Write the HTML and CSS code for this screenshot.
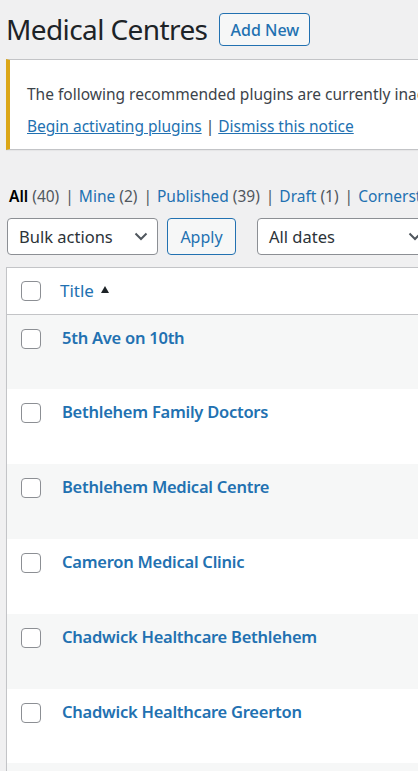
FILE: index.html
```html
<!DOCTYPE html>
<html lang="en">
<head>
<meta charset="utf-8">
<title>Medical Centres</title>
<link rel="stylesheet" href="styles.css">
</head>
<body>
<div class="wrap">
  <div class="head">
    <h1 class="title">Medical Centres</h1>
    <a class="add-new" href="#">Add New</a>
  </div>

  <div class="notice">
    <p>The following recommended plugins are currently inactive: Yoast SEO, Advanced Custom Fields.</p>
    <p><a href="#">Begin activating plugins</a> | <a href="#">Dismiss this notice</a></p>
  </div>

  <ul class="subsubsub">
    <li><a class="current" href="#">All <span class="count">(40)</span></a><span class="sep">|</span></li>
    <li><a href="#">Mine <span class="count">(2)</span></a><span class="sep">|</span></li>
    <li><a href="#">Published <span class="count">(39)</span></a><span class="sep">|</span></li>
    <li><a href="#">Draft <span class="count">(1)</span></a><span class="sep">|</span></li>
    <li><a href="#">Cornerstone content <span class="count">(0)</span></a></li>
  </ul>

  <div class="tablenav">
    <div class="select bulk"><span>Bulk actions</span><svg class="chev" width="14" height="9" viewBox="0 0 14 9"><polyline points="1.5,1.5 7,7 12.5,1.5" fill="none" stroke="#50575e" stroke-width="2"/></svg></div>
    <button class="button">Apply</button>
    <div class="select dates"><span>All dates</span><svg class="chev" width="14" height="9" viewBox="0 0 14 9"><polyline points="1.5,1.5 7,7 12.5,1.5" fill="none" stroke="#50575e" stroke-width="2"/></svg></div>
  </div>

  <table class="list">
    <thead>
      <tr>
        <th class="cb"><span class="checkbox"></span></th>
        <th class="col-title"><a class="sort-link" href="#">Title <span class="sort"></span></a></th>
      </tr>
    </thead>
    <tbody>
      <tr class="alt"><td class="cb"><span class="checkbox"></span></td><td class="col-title"><a class="row-title" href="#">5th Ave on 10th</a></td></tr>
      <tr><td class="cb"><span class="checkbox"></span></td><td class="col-title"><a class="row-title" href="#">Bethlehem Family Doctors</a></td></tr>
      <tr class="alt"><td class="cb"><span class="checkbox"></span></td><td class="col-title"><a class="row-title" href="#">Bethlehem Medical Centre</a></td></tr>
      <tr><td class="cb"><span class="checkbox"></span></td><td class="col-title"><a class="row-title" href="#">Cameron Medical Clinic</a></td></tr>
      <tr class="alt"><td class="cb"><span class="checkbox"></span></td><td class="col-title"><a class="row-title" href="#">Chadwick Healthcare Bethlehem</a></td></tr>
      <tr><td class="cb"><span class="checkbox"></span></td><td class="col-title"><a class="row-title" href="#">Chadwick Healthcare Greerton</a></td></tr>
      <tr class="alt"><td class="cb"><span class="checkbox"></span></td><td class="col-title"><a class="row-title" href="#">Chadwick Healthcare Papamoa</a></td></tr>
    </tbody>
  </table>
</div>
</body>
</html>
```

FILE: styles.css
```css
html, body {
  margin: 0;
  padding: 0;
  background: #f0f0f1;
  overflow: hidden;
}

body {
  font-family: "Noto Sans", "Open Sans", sans-serif;
  font-size: 16px;
  color: #3c434a;
  height: 771px;
}

a {
  color: #2271b1;
}

.wrap {
  width: 760px;
  padding-left: 6px;
}

.head {
  display: flex;
  align-items: center;
  gap: 12px;
  padding-top: 11px;
  height: 37px;
}

.title {
  margin: 0;
  font-size: 28px;
  font-weight: 400;
  line-height: 37px;
  color: #1d2327;
  letter-spacing: -0.6px;
}

.add-new {
  display: flex;
  align-items: center;
  justify-content: center;
  box-sizing: border-box;
  width: 91px;
  height: 33px;
  border: 1px solid #2271b1;
  border-radius: 4px;
  background: #f6f7f7;
  color: #2271b1;
  text-decoration: none;
  font-size: 16px;
  font-weight: 500;
}

.notice {
  margin-top: 11px;
  box-sizing: border-box;
  height: 91px;
  background: #fff;
  border: 1px solid #c3c4c7;
  border-left: 4px solid #dba617;
  box-shadow: 0 1px 1px rgba(0, 0, 0, 0.04);
  padding: 22px 18px 0 17px;
}

.notice p {
  margin: 0 0 8px 0;
  line-height: 24px;
  font-size: 15.5px;
  white-space: nowrap;
}

.notice a {
  text-decoration: underline;
}

.subsubsub {
  list-style: none;
  margin: 34px 0 0 0;
  padding: 0 0 0 3px;
  display: flex;
  height: 24px;
  line-height: 24px;
  font-size: 15.5px;
  white-space: nowrap;
}

.subsubsub a {
  text-decoration: none;
}

.subsubsub a.current {
  color: #000;
  font-weight: 600;
}

.subsubsub .count {
  color: #50575e;
  font-weight: 400;
}

.subsubsub .sep {
  color: #50575e;
  padding: 0 5px 0 6px;
}

.tablenav {
  display: flex;
  align-items: center;
  margin-top: 10px;
  height: 37px;
  padding-left: 1px;
}

.select {
  box-sizing: border-box;
  height: 37px;
  border: 1px solid #8c8f94;
  border-radius: 4px;
  background: #fff;
  display: flex;
  align-items: center;
  justify-content: space-between;
  padding: 0 9px 0 11px;
  font-size: 16.5px;
  color: #2c3338;
}

.bulk {
  width: 151px;
}

.dates {
  width: 175px;
  margin-left: 21px;
}

.chev {
  display: block;
}

.button {
  box-sizing: border-box;
  height: 37px;
  width: 69px;
  margin-left: 9px;
  border: 1px solid #2271b1;
  border-radius: 4px;
  background: #f6f7f7;
  color: #2271b1;
  font-family: inherit;
  font-size: 16px;
  padding: 0;
}

.list {
  margin-top: 12px;
  width: 700px;
  border-collapse: collapse;
  border: 1px solid #c3c4c7;
  background: #fff;
  box-shadow: 0 1px 1px rgba(0, 0, 0, 0.04);
}

.list th,
.list td {
  padding: 0;
  text-align: left;
  vertical-align: top;
}

.list thead tr {
  height: 47px;
  border-bottom: 1px solid #c3c4c7;
}

.list thead th {
  vertical-align: middle;
  font-weight: 400;
}

.list .cb {
  width: 39px;
  padding-left: 14px;
}

.list tbody td.cb {
  padding-top: 14px;
}

.checkbox {
  display: block;
  box-sizing: border-box;
  width: 20px;
  height: 20px;
  border: 1px solid #8c8f94;
  border-radius: 4px;
  background: #fff;
}

.col-title a {
  text-decoration: none;
}

.sort-link {
  display: inline-flex;
  align-items: center;
  font-size: 17px;
  line-height: 24px;
}

.sort {
  display: inline-block;
  width: 0;
  height: 0;
  margin-left: 7px;
  margin-top: -4px;
  border-left: 4.5px solid transparent;
  border-right: 4.5px solid transparent;
  border-bottom: 7px solid #1d2327;
}

.list tbody tr {
  height: 74.83px;
}

.list tbody tr.alt {
  background: #f6f7f7;
}

.list tbody td.col-title {
  padding-top: 11px;
  padding-left: 2px;
}

.row-title {
  font-weight: 600;
  font-size: 16.5px;
  letter-spacing: -0.25px;
  line-height: 24px;
}
```
